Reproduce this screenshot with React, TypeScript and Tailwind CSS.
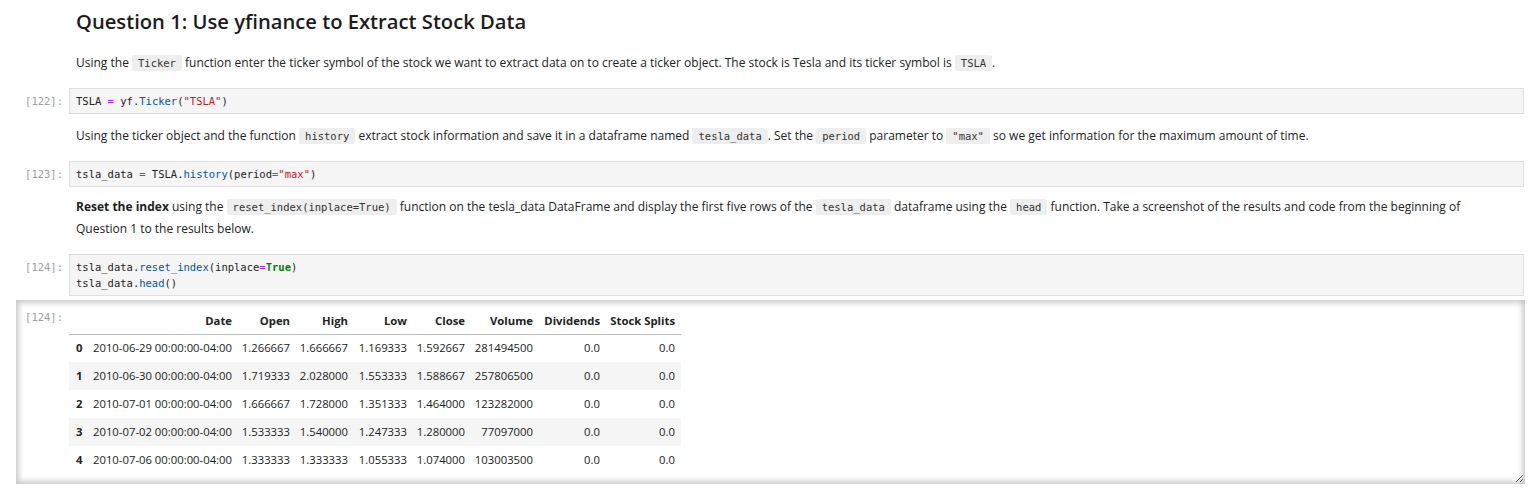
import React from 'react';

const mono = "font-['DejaVu_Sans_Mono',monospace]";

const Code = ({ children }: { children: React.ReactNode }) => (
  <code className={`${mono} text-[10.5px] bg-[#eeeeee] text-[#333] px-[6px] py-[2px] rounded-[2px]`}>{children}</code>
);

const Prompt = ({ n }: { n: number }) => (
  <div className={`${mono} w-[69px] shrink-0 text-right pr-[6px] text-[10.5px] leading-[16px] text-[#9e9e9e]`}>
    [{n}]:
  </div>
);

const CodeCell = ({ n, lines }: { n: number; lines: React.ReactNode[] }) => (
  <div className="flex items-start">
    <div className="pt-[5px]">
      <Prompt n={n} />
    </div>
    <div className={`flex-1 mr-[9px] bg-[#f5f5f5] border border-[#e0e0e0] px-[6px] py-[4px] ${mono} text-[10.5px] leading-[16px] text-[#222]`}>
      {lines.map((l, i) => (
        <div key={i} className="whitespace-pre">{l}</div>
      ))}
    </div>
  </div>
);

const Op = ({ c }: { c: string }) => <span className="text-[#aa22ff]">{c}</span>;
const Prop = ({ c }: { c: string }) => <span className="text-[#0055aa]">{c}</span>;
const Str = ({ c }: { c: string }) => <span className="text-[#ba2121]">{c}</span>;

const rows = [
  ['0', '2010-06-29 00:00:00-04:00', '1.266667', '1.666667', '1.169333', '1.592667', '281494500', '0.0', '0.0'],
  ['1', '2010-06-30 00:00:00-04:00', '1.719333', '2.028000', '1.553333', '1.588667', '257806500', '0.0', '0.0'],
  ['2', '2010-07-01 00:00:00-04:00', '1.666667', '1.728000', '1.351333', '1.464000', '123282000', '0.0', '0.0'],
  ['3', '2010-07-02 00:00:00-04:00', '1.533333', '1.540000', '1.247333', '1.280000', '77097000', '0.0', '0.0'],
  ['4', '2010-07-06 00:00:00-04:00', '1.333333', '1.333333', '1.055333', '1.074000', '103003500', '0.0', '0.0'],
];

const headers = ['', 'Date', 'Open', 'High', 'Low', 'Close', 'Volume', 'Dividends', 'Stock Splits'];
const widths = [19, 150, 58, 58, 59, 58, 68, 67, 75];

export default function App() {
  return (
    <div className="w-[1533px] h-[499px] overflow-hidden bg-white font-['Open_Sans',sans-serif] text-[12px] text-[#222]">
      <h2 className="pl-[76px] pt-[6px] text-[20.2px] leading-[30px] font-semibold text-[#1c1c1c]">
        Question 1: Use yfinance to Extract Stock Data
      </h2>

      <p className="pl-[76px] mt-[16px] leading-[22px]">
        Using the <Code>Ticker</Code> function enter the ticker symbol of the stock we want to extract data on to create a ticker object. The stock is Tesla and its ticker symbol is <Code>TSLA</Code>.
      </p>

      <div className="mt-[14px]">
        <CodeCell
          n={122}
          lines={[
            <>TSLA <Op c="=" /> yf.<Prop c="Ticker" />(<Str c={'"TSLA"'} />)</>,
          ]}
        />
      </div>

      <p className="pl-[76px] mt-[11px] leading-[22px]">
        Using the ticker object and the function <Code>history</Code> extract stock information and save it in a dataframe named <Code>tesla_data</Code>. Set the <Code>period</Code> parameter to <Code>"max"</Code> so we get information for the maximum amount of time.
      </p>

      <div className="mt-[14px]">
        <CodeCell
          n={123}
          lines={[
            <>tsla_data <Op c="=" /> TSLA.<Prop c="history" />(period<Op c="=" /><Str c={'"max"'} />)</>,
          ]}
        />
      </div>

      <p className="pl-[76px] pr-[60px] mt-[9px] leading-[22px]">
        <b className="font-bold">Reset the index</b> using the <Code>reset_index(inplace=True)</Code> function on the tesla_data DataFrame and display the first five rows of the <Code>tesla_data</Code> dataframe using the <Code>head</Code> function. Take a screenshot of the results and code from the beginning of
        <br />
        Question 1 to the results below.
      </p>

      <div className="mt-[14px]">
        <CodeCell
          n={124}
          lines={[
            <>tsla_data.<Prop c="reset_index" />(inplace<Op c="=" /><span className="text-[#008000] font-bold">True</span>)</>,
            <>tsla_data.<Prop c="head" />()</>,
          ]}
        />
      </div>

      <div className="relative mt-[4px] ml-[16px] mr-[8px] h-[184px] bg-white shadow-[inset_0_0_6px_2px_rgba(0,0,0,0.25)] flex items-start">
        <div className={`${mono} w-[53px] shrink-0 text-right pr-[6px] pt-[9px] text-[10.5px] leading-[16px] text-[#9e9e9e]`}>
          [124]:
        </div>
        <table className="mt-[9px] table-fixed border-collapse text-[11.3px] text-[#222] w-[612px]">
          <colgroup>
            {widths.map((w, i) => (
              <col key={i} style={{ width: w }} />
            ))}
          </colgroup>
          <thead>
            <tr className="h-[25px] border-b border-[#bdbdbd]">
              {headers.map((h, i) => (
                <th key={i} className="text-right pr-[6px] font-bold whitespace-nowrap">{h}</th>
              ))}
            </tr>
          </thead>
          <tbody>
            {rows.map((r, ri) => (
              <tr key={ri} className={`h-[28px] ${ri % 2 === 1 ? 'bg-[#f5f5f5]' : 'bg-white'}`}>
                {r.map((c, ci) => (
                  ci === 0 ? (
                    <th key={ci} className="text-left pl-[7px] font-bold">{c}</th>
                  ) : (
                    <td key={ci} className="text-right pr-[6px] whitespace-nowrap">{c}</td>
                  )
                ))}
              </tr>
            ))}
          </tbody>
        </table>
        <svg className="absolute right-[1px] bottom-[1px]" width="9" height="9" viewBox="0 0 9 9">
          <path d="M8 1 L1 8 M8 5 L5 8" stroke="#666" strokeWidth="1" />
        </svg>
      </div>
    </div>
  );
}
